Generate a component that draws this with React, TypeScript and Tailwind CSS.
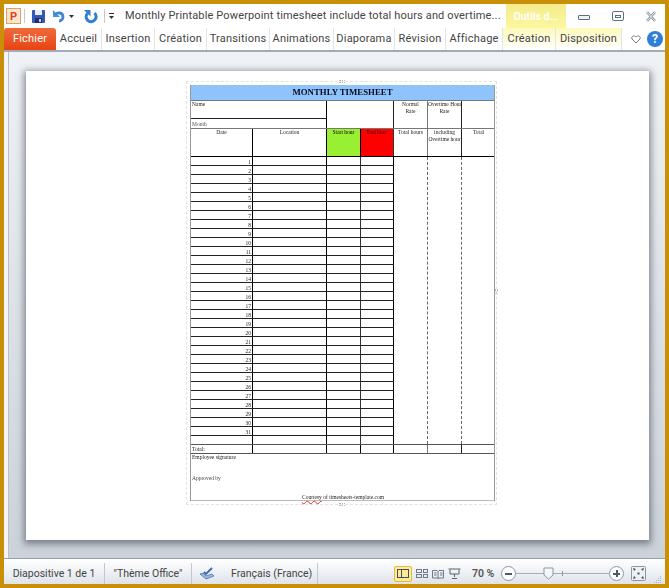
import React from "react";

const ui = "font-['Roboto',sans-serif]";
const serif = "font-['Liberation_Serif',serif]";

const tabs = [
  { label: "Accueil", w: "w-[46px]" },
  { label: "Insertion", w: "w-[53px]" },
  { label: "Création", w: "w-[52px]" },
  { label: "Transitions", w: "w-[63px]" },
  { label: "Animations", w: "w-[64px]" },
  { label: "Diaporama", w: "w-[61px]" },
  { label: "Révision", w: "w-[51px]" },
  { label: "Affichage", w: "w-[57px]" },
];

const cols = "grid grid-cols-[62px_74px_34px_33px_34px_34px_33px]";
const leftCols = "grid grid-cols-[62px_74px_34px_33px]";

const TitleBar = () => (
  <div className="flex h-[24px] items-center bg-white">
    <div className={`ml-[2px] flex h-[16px] w-[15px] items-center justify-center border border-[#e0a060] bg-[#fbe3cc] text-[11px] font-bold leading-none text-[#d24726] ${ui}`}>
      P
    </div>
    <div className="ml-[3px] h-[14px] w-px bg-[#c8c8c8]" />
    <svg className="ml-[6px]" width="15" height="15" viewBox="0 0 15 15" aria-hidden="true">
      <rect x="1" y="1" width="13" height="13" rx="1" fill="#3557b7" />
      <rect x="4" y="1" width="7" height="5" fill="#e8eef8" />
      <rect x="4" y="9" width="7" height="5" fill="#20306e" />
      <rect x="8" y="10" width="2" height="3" fill="#c9d4ea" />
    </svg>
    <svg className="ml-[6px]" width="14" height="14" viewBox="0 0 14 14" fill="none" aria-hidden="true">
      <path d="M1 1v7h7" fill="#4a90d9" />
      <path d="M3 6c2-3 8-3 8 2 0 2-2 4-4 4" stroke="#3f87d6" strokeWidth="2.8" />
    </svg>
    <svg className="ml-[3px]" width="5" height="3" viewBox="0 0 5 3" aria-hidden="true">
      <path d="M0 0h5L2.5 3z" fill="#333" />
    </svg>
    <svg className="ml-[9px]" width="15" height="15" viewBox="0 0 15 15" fill="none" aria-hidden="true">
      <path d="M11.500 4a5 5 0 1 1-7 .2" stroke="#2f7fd2" strokeWidth="3" />
      <path d="M1 1h6.500v6.500z" fill="#2f7fd2" />
    </svg>
    <div className="ml-[6px] h-[14px] w-px bg-[#c8c8c8]" />
    <div className="ml-[4px] flex flex-col items-center gap-[2px]">
      <div className="h-px w-[5px] bg-[#333]" />
      <svg width="5" height="3" viewBox="0 0 5 3" aria-hidden="true">
        <path d="M0 0h5L2.5 3z" fill="#333" />
      </svg>
    </div>
    <div className={`ml-[11px] w-[381px] whitespace-nowrap text-[11px] tracking-[0.15px] text-[#444] ${ui}`}>
      Monthly Printable Powerpoint timesheet include total hours and overtime...
    </div>
    <div className={`h-full w-[60px] bg-gradient-to-b from-[#f5ec8c] to-[#fbf7a0] pt-[5px] text-center text-[10.5px] font-semibold text-white ${ui}`}>
      Outils d...
    </div>
    <div className="ml-[12px] mt-[3px] h-[5px] w-[12px] self-center rounded-[1px] border border-[#5d6f82] bg-[#eef2f6]" />
    <div className="ml-[22px] flex h-[10px] w-[12px] items-center justify-center rounded-[2px] border border-[#5d6f82]">
      <div className="h-[3px] w-[6px] border border-[#5d6f82]" />
    </div>
    <svg className="ml-[21px]" width="12" height="11" viewBox="0 0 12 11" fill="none" aria-hidden="true">
      <path d="M2 1l8 9M10 1l-8 9" stroke="#7d8b99" strokeWidth="2.4" />
      <path d="M2 1l8 9M10 1l-8 9" stroke="#fff" strokeWidth="0.9" />
    </svg>
  </div>
);

const TabBar = () => (
  <div className={`flex h-[22px] items-stretch bg-white text-[11px] tracking-[0.2px] text-[#444] ${ui}`}>
    <div className="flex w-[52px] items-center justify-center rounded-t-[3px] bg-gradient-to-b from-[#ee6a3a] to-[#e8420e] text-white">
      Fichier
    </div>
    {tabs.map((t) => (
      <div key={t.label} className={`flex ${t.w} items-center justify-center border-r border-[#e2e4e7]`}>
        {t.label}
      </div>
    ))}
    <div className="flex w-[119px] bg-gradient-to-b from-[#fdf9b8] to-white">
      <div className="flex w-[53px] items-center justify-center border-r border-[#e2e4e7]">Création</div>
      <div className="flex w-[66px] items-center justify-center border-r border-[#e2e4e7]">Disposition</div>
    </div>
    <svg className="ml-[9px] self-center" width="10" height="9" viewBox="0 0 10 9" fill="none" aria-hidden="true">
      <path d="M5 8L1 4c-1-2 1-3.500 2.500-3 .7.200 1.500 1 1.500 1s.8-.8 1.500-1C8 .5 10 2 9 4z" stroke="#777" strokeWidth="1" />
    </svg>
    <div className="ml-[6px] flex h-[16px] w-[16px] items-center justify-center self-center rounded-full bg-[#2f7fd6] text-[12px] font-bold leading-none text-white">
      ?
    </div>
  </div>
);

const Handle = ({ className }: { className: string }) => (
  <div className={`absolute h-[3px] w-[6px] border-y border-dotted border-[#b5b5b5] ${className}`} />
);

const Timesheet = () => (
  <div className={`relative ml-[160px] mt-[9px] h-[424px] w-[311px] border border-dashed border-[#e2e2e2] p-[3px] text-[5.5px] leading-[7px] text-[#222] ${serif}`}>
    <Handle className="left-[152px] top-[-2px]" />
    <Handle className="left-[152px] bottom-[-2px]" />
    <Handle className="right-[-3px] top-[208px] rotate-90" />
    <div className="flex h-full w-[305px] flex-col border-x border-[#999] blur-[0.35px]">
      <div className="flex h-[15px] items-center justify-center bg-[#8fc3fb] text-[8.8px] font-bold text-[#0a0a20]">
        MONTHLY TIMESHEET
      </div>

      <div className={`${cols} h-[19px] border-t border-[#777]`}>
        <div className="border-b border-b-[#222] pl-[1px]">Name</div>
        <div className="border-b border-r border-b-[#222] border-r-black" />
        <div />
        <div className="border-r border-[#222]" />
        <div className="border-r border-[#777] text-center">
          Normal
          <br />
          Rate
        </div>
        <div className="whitespace-nowrap border-r border-[#222] text-center">
          Overtime Hour
          <br />
          Rate
        </div>
        <div />
      </div>
      <div className={`${cols} h-[9px]`}>
        <div className="flex items-end pl-[1px] text-[#555]">Month</div>
        <div className="border-r border-black" />
        <div />
        <div className="border-r border-[#222]" />
        <div className="border-r border-[#777]" />
        <div className="border-r border-[#222]" />
        <div />
      </div>

      <div className={`${cols} h-[29px] border-y border-b-black border-t-[#777] text-center`}>
        <div className="border-r border-black">Date</div>
        <div className="border-r border-black">Location</div>
        <div className="border-r border-black bg-[#99f033] text-black">Start hour</div>
        <div className="border-r border-[#333] bg-[#ff0000] text-[#300]">End hour</div>
        <div className="border-r border-[#777]">Total hours</div>
        <div className="whitespace-nowrap border-r border-[#222]">
          including
          <br />
          Overtime hour
        </div>
        <div>Total</div>
      </div>

      <div className="flex h-[287px]">
        <div className="flex w-[203px] flex-col">
          {Array.from({ length: 32 }, (_, i) => (
            <div key={i} className={`${leftCols} flex-1 ${i < 31 ? "border-b border-[#222]" : ""}`}>
              <div className="flex items-end justify-end border-r border-black pr-[1px] leading-[6px]">{i < 31 ? i + 1 : ""}</div>
              <div className="border-r border-black" />
              <div className="border-r border-[#333]" />
              <div className="border-r border-black" />
            </div>
          ))}
        </div>
        <div className="w-[34px] border-r border-dashed border-[#666]" />
        <div className="w-[34px] border-r border-dashed border-[#666]" />
      </div>

      <div className={`${cols} h-[10px] border-y border-[#555]`}>
        <div className="flex items-end border-r border-black pl-[1px]">Total:</div>
        <div className="border-r border-black" />
        <div className="border-r border-black" />
        <div className="border-r border-black" />
        <div className="border-r border-[#777]" />
        <div className="border-r border-[#222]" />
        <div />
      </div>

      <div className="flex flex-1 flex-col border-b border-[#bbb] pl-[1px]">
        <div>Employee signature</div>
        <div className="mt-[14px] text-[#444]">Approved by</div>
        <div className="mt-auto mb-[-1px] ml-[110px] whitespace-nowrap">
          <span className="underline decoration-[#e03030] decoration-wavy decoration-[0.5px]">Courtesy</span> of timesheets-template.com
        </div>
      </div>
    </div>
  </div>
);

const ViewIcons = () => (
  <>
    <div className="flex h-[16px] w-[18px] items-center justify-center rounded-[2px] border border-[#e6b93c] bg-[#fdeb9c]">
      <div className="flex h-[9px] w-[12px] border border-[#40505f]">
        <div className="w-[4px] border-r border-[#40505f]" />
      </div>
    </div>
    <div className="ml-[4px] grid h-[9px] w-[12px] grid-cols-2 gap-[1px]">
      <div className="border border-[#6d7b89]" />
      <div className="border border-[#6d7b89]" />
      <div className="border border-[#6d7b89]" />
      <div className="border border-[#6d7b89]" />
    </div>
    <svg className="ml-[4px]" width="12" height="10" viewBox="0 0 12 10" fill="none" stroke="#6d7b89" aria-hidden="true">
      <path d="M.5 1.500h4.500l1 1 1-1h4.500v7.500h-4.500l-1 .5-1-.5h-4.500zM6 2.500v7M2 4h2.500M2 6h2.500M8 4h2.500M8 6h2.500" />
    </svg>
    <svg className="ml-[4px]" width="13" height="11" viewBox="0 0 13 11" fill="none" stroke="#56646f" aria-hidden="true">
      <path d="M.5 1h12M2 1.500v4.500h9v-4.500M6.500 6v3M4 10.500h5" />
    </svg>
  </>
);

const StatusBar = () => (
  <div className={`flex h-[26px] items-stretch border-t border-[#9aa0a8] bg-gradient-to-b from-white to-[#dfe4ea] pt-[4px] text-[10.5px] text-[#444] ${ui}`}>
    <div className="flex w-[101px] items-center justify-center border-r border-[#c3c8ce]">Diapositive 1 de 1</div>
    <div className="flex w-[87px] items-center justify-center border-r border-[#c3c8ce]">"Thème Office"</div>
    <div className="flex w-[126px] items-center border-r border-[#c3c8ce]">
      <svg className="ml-[7px]" width="16" height="13" viewBox="0 0 16 13" fill="none" aria-hidden="true">
        <path d="M1 7l6 5 8-3-2-2-6 2-3-3z" fill="#9db7e0" stroke="#4e74b5" strokeWidth=".8" />
        <path d="M5 5l2 2 6-6" stroke="#3b67b0" strokeWidth="1.800" />
      </svg>
      <span className="ml-[16px] whitespace-nowrap">Français (France)</span>
    </div>
    <div className="flex flex-1 items-center pl-[76px]">
      <ViewIcons />
      <span className="ml-[11px] whitespace-nowrap font-semibold text-[#555]">70 %</span>
      <div className="ml-[7px] flex h-[15px] w-[15px] items-center justify-center rounded-full border border-[#8b97a3] bg-white">
        <div className="h-[2px] w-[7px] bg-[#4c5a68]" />
      </div>
      <div className="relative h-px w-[93px] bg-[#a5adb6]">
        <div className="absolute left-[46px] top-[-2px] h-[5px] w-px bg-[#8b97a3]" />
        <svg className="absolute left-[27px] top-[-6px]" width="11" height="13" viewBox="0 0 11 13" aria-hidden="true">
          <path d="M1 1h9v7l-4.500 4L1 8z" fill="#f5f7f9" stroke="#8b97a3" />
        </svg>
      </div>
      <div className="relative flex h-[15px] w-[15px] items-center justify-center rounded-full border border-[#8b97a3] bg-white">
        <div className="h-[2px] w-[7px] bg-[#4c5a68]" />
        <div className="absolute h-[7px] w-[2px] bg-[#4c5a68]" />
      </div>
      <svg className="ml-[7px]" width="15" height="15" viewBox="0 0 15 15" fill="none" aria-hidden="true">
        <rect x=".5" y=".5" width="14" height="14" rx="1" fill="#eef1f4" stroke="#8b97a3" />
        <path d="M2 2l3 1-2 2zM13 2l-1 3-2-2zM2 13l1-3 2 2zM13 13l-3-1 2-2z" fill="#40505f" />
        <rect x="6.500" y="6.500" width="2" height="2" fill="#40505f" />
      </svg>
      <svg className="ml-[7px] self-end" width="9" height="9" viewBox="0 0 9 9" aria-hidden="true">
        <path d="M7 1h1v1H7zM5 3h1v1H5zM7 3h1v1H7zM3 5h1v1H3zM5 5h1v1H5zM7 5h1v1H7zM1 7h1v1H1zM3 7h1v1H3zM5 7h1v1H5zM7 7h1v1H7z" fill="#aab2ba" />
      </svg>
    </div>
  </div>
);

export default function App() {
  return (
    <div className="flex h-[588px] w-[669px] flex-col bg-[#c98f06] p-[4px]">
      <TitleBar />
      <TabBar />
      <div className="h-[2px] bg-[#a4abb3]" />
      <div className="flex-1 bg-[#f3f5f8] pl-[4px]">
        <div className="h-full border-l border-[#b9bfc6] bg-gradient-to-b from-[#eff2f6] to-[#ccd2d9] pl-[17px] pt-[19px]">
          <div className="h-[469px] w-[623px] bg-white pt-px shadow-[0_2px_7px_2px_rgba(50,55,65,0.55)]">
            <Timesheet />
          </div>
        </div>
      </div>
      <StatusBar />
    </div>
  );
}
